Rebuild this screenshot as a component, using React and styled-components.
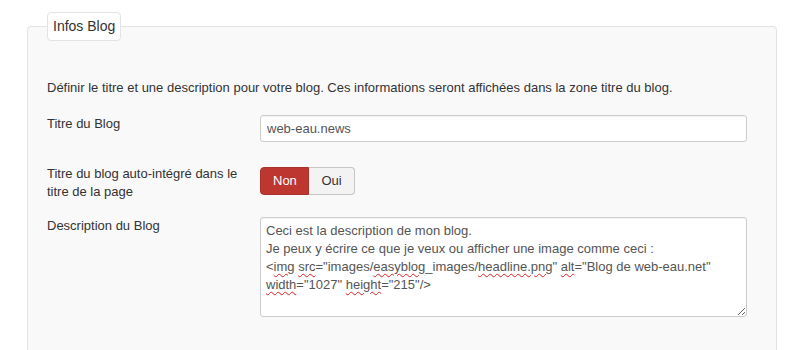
import React from "react";
import styled, { createGlobalStyle } from "styled-components";

const Global = createGlobalStyle`
  html, body { margin: 0; padding: 0; background: #ffffff; }
  body {
    font-family: "Liberation Sans", Arial, sans-serif;
    font-size: 13px;
    line-height: 18px;
    color: #333333;
  }
`;

const Page = styled.div`
  padding: 12px 23px 0 27px;
  height: 338px;
  overflow: hidden;
`;

const Fieldset = styled.fieldset`
  margin: 0;
  padding: 0 29px 40px 19px;
  border: 1px solid #e3e3e3;
  border-radius: 4px;
  background: #f9f9f9;
  min-width: 0;
`;

const Legend = styled.legend`
  margin: 0;
  padding: 0 5px;
  height: 27px;
  line-height: 27px;
  font-size: 14px;
  color: #333333;
  background: #ffffff;
  border: 1px solid #e3e3e3;
  border-radius: 4px;
`;

const Intro = styled.p`
  margin: 38px 0 0;
  line-height: 18px;
`;

const Row = styled.div`
  display: grid;
  grid-template-columns: 200px 1fr;
  column-gap: 13px;
  align-items: start;
  margin-top: ${(p) => p.$mt}px;
`;

const Label = styled.label`
  display: block;
  line-height: 18px;
  padding-top: ${(p) => p.$pt || 0}px;
  color: #333333;
`;

const Input = styled.input`
  box-sizing: border-box;
  display: block;
  width: 100%;
  height: 27px;
  margin: 0;
  padding: 0 6px;
  border: 1px solid #cccccc;
  border-radius: 3px;
  background: #ffffff;
  font-family: "Liberation Sans", Arial, sans-serif;
  font-size: 13px;
  color: #555555;
  box-shadow: inset 0 1px 1px rgba(0, 0, 0, 0.05);
  outline: none;
`;

const Toggle = styled.div`
  display: flex;
  margin-top: 2px;
`;

const ToggleButton = styled.button`
  box-sizing: border-box;
  height: 28px;
  margin: 0;
  padding: 0 ${(p) => (p.$active ? 12 : 12)}px;
  font-family: "Liberation Sans", Arial, sans-serif;
  font-size: 13px;
  line-height: 26px;
  cursor: pointer;
  border: 1px solid ${(p) => (p.$active ? "#a8322c" : "#c5c5c5")};
  background: ${(p) => (p.$active ? "#bd362f" : "#f3f3f3")};
  color: ${(p) => (p.$active ? "#ffffff" : "#333333")};
  border-radius: ${(p) => (p.$first ? "4px 0 0 4px" : "0 4px 4px 0")};
  ${(p) => (p.$first ? "" : "border-left: none;")}
  width: ${(p) => p.$w}px;
`;

const TextArea = styled.div`
  box-sizing: border-box;
  height: 100px;
  padding: 4px 5px;
  border: 1px solid #cccccc;
  border-radius: 3px;
  background: #ffffff;
  color: #555555;
  font-size: 13px;
  line-height: 18px;
  overflow: auto;
  resize: vertical;
  box-shadow: inset 0 1px 1px rgba(0, 0, 0, 0.05);
`;

const Misspelled = styled.span`
  text-decoration: underline wavy #e02020;
  text-decoration-thickness: 1px;
  text-underline-offset: 2px;
`;

export default function App() {
  return (
    <>
      <Global />
      <Page>
        <Fieldset>
          <Legend>Infos Blog</Legend>
          <Intro>
            Définir le titre et une description pour votre blog. Ces informations seront affichées dans la zone titre du blog.
          </Intro>
          <Row $mt={18}>
            <Label $pt={0}>Titre du Blog</Label>
            <Input defaultValue="web-eau.news" />
          </Row>
          <Row $mt={23}>
            <Label>Titre du blog auto-intégré dans le titre de la page</Label>
            <Toggle>
              <ToggleButton $active $first $w={49}>Non</ToggleButton>
              <ToggleButton $w={46}>Oui</ToggleButton>
            </Toggle>
          </Row>
          <Row $mt={16}>
            <Label>Description du Blog</Label>
            <TextArea role="textbox" aria-multiline="true">
              Ceci est la description de mon blog.
              <br />
              Je peux y écrire ce que je veux ou afficher une image comme ceci :
              <br />
              &lt;<Misspelled>img</Misspelled> <Misspelled>src</Misspelled>="images/<Misspelled>easyblog</Misspelled>_images/<Misspelled>headline.png</Misspelled>" <Misspelled>alt</Misspelled>="Blog de web-eau.net"
              <br />
              <Misspelled>width</Misspelled>="1027" <Misspelled>height</Misspelled>="215"/&gt;
            </TextArea>
          </Row>
        </Fieldset>
      </Page>
    </>
  );
}
